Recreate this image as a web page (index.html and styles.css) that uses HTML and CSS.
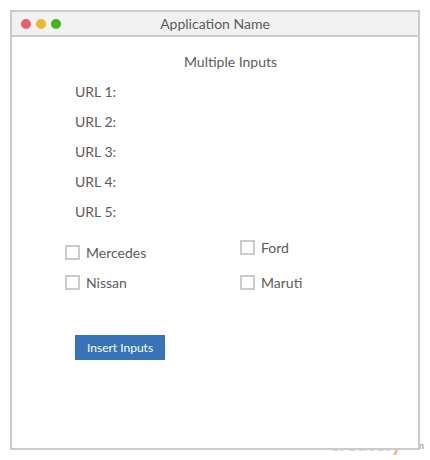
FILE: index.html
```html
<!DOCTYPE html>
<html lang="en">
<head>
<meta charset="utf-8">
<title>Application Name</title>
<link rel="stylesheet" href="styles.css">
</head>
<body>
<div class="stage">
  <div class="watermark"><span class="brand">createl<span class="brand-tail">y</span></span><span class="domain">.com</span></div>
  <main class="window">
    <header class="titlebar">
      <div class="lights">
        <span class="light red"></span>
        <span class="light yellow"></span>
        <span class="light green"></span>
      </div>
      <h1 class="title">Application Name</h1>
    </header>
    <form class="content">
      <h2 class="heading">Multiple Inputs</h2>
      <ul class="urls">
        <li>URL 1:</li>
        <li>URL 2:</li>
        <li>URL 3:</li>
        <li>URL 4:</li>
        <li>URL 5:</li>
      </ul>
      <div class="options">
        <div class="column">
          <label class="option"><input type="checkbox">Mercedes</label>
          <label class="option"><input type="checkbox">Nissan</label>
        </div>
        <div class="column column-wide">
          <label class="option"><input type="checkbox">Ford</label>
          <label class="option"><input type="checkbox">Maruti</label>
        </div>
      </div>
      <button class="submit" type="button">Insert Inputs</button>
    </form>
  </main>
</div>
</body>
</html>
```

FILE: styles.css
```css
* {
  box-sizing: border-box;
}

body {
  margin: 0;
  background: #fff;
  color: #5c5c5c;
  font: 14px/20px Lato, sans-serif;
}

.stage {
  position: relative;
  min-height: 100vh;
  padding: 10px;
  display: flex;
}

.window {
  position: relative;
  flex: 1;
  display: flex;
  flex-direction: column;
  background: #fff;
  border: 2px solid #cbcbcb;
}

.titlebar {
  display: grid;
  grid-template-columns: 1fr auto 1fr;
  align-items: center;
  height: 25px;
  padding: 0 9px;
  background: #f1f1f1;
  border-bottom: 2px solid #cbcbcb;
}

.lights {
  display: flex;
  gap: 5px;
}

.light {
  width: 10px;
  height: 10px;
  border-radius: 50%;
}

.red { background: #e95f6b; }
.yellow { background: #ecb731; }
.green { background: #3cb91a; }

.title,
.heading {
  margin: 0;
  font-size: 14px;
  font-weight: 400;
}

.content {
  padding: 15px 53px;
}

.heading {
  text-align: center;
  padding-left: 31px;
}

.urls {
  display: grid;
  gap: 10px;
  margin: 10px 0 0;
  padding: 0 10px;
  list-style: none;
}

.options {
  display: grid;
  grid-template-columns: 175px 1fr;
  align-items: end;
  margin-top: 16px;
}

.column {
  display: grid;
  gap: 10px;
}

.column-wide {
  gap: 15px;
}

.option {
  display: flex;
  align-items: flex-start;
  gap: 6px;
}

.option input {
  appearance: none;
  width: 15px;
  height: 15px;
  margin: 2px 0 0;
  background: #fff;
  border: 2px solid #cbcbcb;
}

.option input:checked {
  background: #3673b8;
}

.submit {
  display: block;
  margin: 42px 10px 0;
  padding: 0 12px;
  height: 25px;
  border: 0;
  background: #3673b8;
  color: #fff;
  font: 12px/24px Lato, sans-serif;
}

.watermark {
  position: absolute;
  right: 6px;
  bottom: 5px;
  display: flex;
  align-items: flex-end;
}

.brand {
  color: #c3d8ea;
  font-size: 20px;
  font-weight: 700;
  line-height: 24px;
}

.brand-tail {
  color: #f8b978;
  font-size: 24px;
}

.domain {
  color: #888;
  font-size: 10px;
}
```
